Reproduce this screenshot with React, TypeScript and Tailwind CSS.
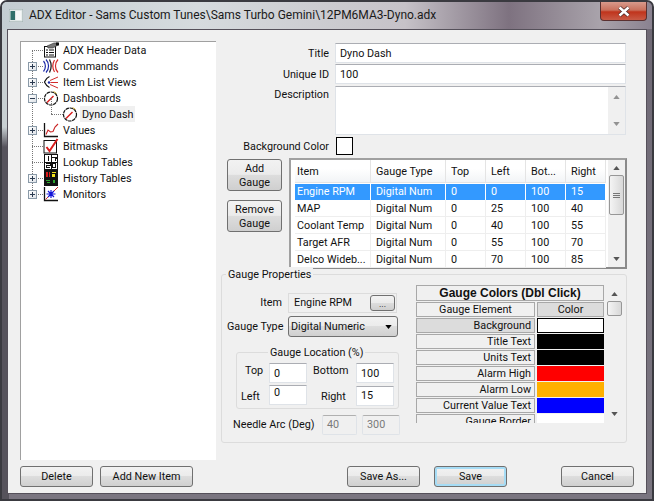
import type { ReactNode } from "react";

const font = "font-['Roboto',_'Noto_Sans',_sans-serif]";

type TreeItem = {
  label: string;
  icon: ReactNode;
  toggle?: "plus" | "minus";
  child?: boolean;
  selected?: boolean;
};

function Gauge() {
  return (
    <svg viewBox="0 0 16 16" className="h-4 w-4 shrink-0">
      <circle cx="8" cy="8.500" r="6.500" fill="#fff" stroke="#111" strokeWidth="1.200" strokeDasharray="3.500 .7" />
      <path d="M4 12.500 10.500 6" stroke="#d81c1c" strokeWidth="1.400" />
      <path d="M10.500 1.500 13.500 3.500" stroke="#c9a227" strokeWidth="1" />
    </svg>
  );
}

function HeaderIcon() {
  return (
    <svg viewBox="0 0 16 16" className="h-4 w-4 shrink-0">
      <rect x="1.500" y="4.500" width="11" height="10.500" fill="#fff" stroke="#111" />
      <path d="M3 8h2M6 8h5M3 10.500h2M6 10.500h5M3 13h2M6 13h5" stroke="#111" />
      <path d="M4 4 11 1l4 0v2l-5 3H5z" fill="#777" stroke="#333" strokeWidth=".6" />
      <rect x="13" y="0.500" width="3" height="3" fill="#111" />
    </svg>
  );
}

function CommandsIcon() {
  return (
    <svg viewBox="0 0 16 16" className="h-4 w-4 shrink-0" fill="none">
      <path d="M0.500 3c2.500 3 2.500 7.500 0 10.500M3 1.500c3.400 3.600 3.400 9.600 0 13" stroke="#1c2aa8" strokeWidth="1.200" />
      <path d="M6.500 1.500c2 3.800 2 9 0 13" stroke="#222" strokeWidth="1.300" />
      <path d="M11.500 2c-2 3.500-2 8.500 0 12M15 1.500c-3.400 3.600-3.400 9.600 0 13" stroke="#d42a2a" strokeWidth="1.200" />
    </svg>
  );
}

function ViewsIcon() {
  return (
    <svg viewBox="0 0 16 16" className="h-4 w-4 shrink-0" fill="none">
      <path d="M6.500 2.500C3 4 2.500 6 1.500 8c1 2 1.500 4 5 5.500" stroke="#111" strokeWidth="1.200" />
      <path d="M7 6.500 15 3M7.500 8.500H15M7 10.500l8 3.500" stroke="#d42a2a" />
      <circle cx="6" cy="8.500" r="1.200" fill="#1c2aa8" />
    </svg>
  );
}

function ValuesIcon() {
  return (
    <svg viewBox="0 0 16 16" className="h-4 w-4 shrink-0" fill="none">
      <path d="M1.500 1v13.500H15" stroke="#111" strokeWidth="1.300" />
      <path d="M3 12.500 5 8l2.500 2L10 9.500 12 5l3-3" stroke="#c92424" strokeWidth="1.100" />
    </svg>
  );
}

function BitmasksIcon() {
  return (
    <svg viewBox="0 0 16 16" className="h-4 w-4 shrink-0" fill="none">
      <rect x="1" y="2.500" width="12.500" height="12.500" fill="#fff" stroke="#111" />
      <path d="M3.500 9 6.500 13 14.500 1" stroke="#d81c1c" strokeWidth="2" />
    </svg>
  );
}

function DigitCells({ colors }: { colors: string[] }) {
  return (
    <svg viewBox="0 0 14 16" className="mx-[1px] h-4 w-[14px] shrink-0" shapeRendering="crispEdges" fill="none">
      <rect x="0.500" y="0.500" width="13" height="15" fill={colors[0] === "#fff" ? "#fff" : "#111"} stroke="#111" />
      <rect x="2" y="2" width="4" height="5" fill={colors[0]} />
      <rect x="8" y="2" width="4" height="5" fill={colors[1]} />
      <rect x="2" y="9" width="4" height="5" fill={colors[2]} />
      <rect x="8" y="9" width="4" height="5" fill={colors[3]} />
      <path d="M4 2v5M8 3h4v1h-1v3M2 9.500h4v2H2v2h4M8.500 9.500h3v4h-3z" stroke="#111" />
      <path d="M0 8h14M7 0v16" stroke="#111" />
    </svg>
  );
}

function MonitorsIcon() {
  return (
    <svg viewBox="0 0 16 16" className="h-4 w-4 shrink-0" fill="none">
      <path d="M1.500 1v13.500H15" stroke="#111" strokeWidth="1.300" />
      <path d="M2.500 13.500 15 1" stroke="#d42a2a" />
      <path d="M8 4v8M3.500 8h9M5 5l6 6M11 5l-6 6" stroke="#1414d8" strokeWidth="1.200" />
    </svg>
  );
}

const treeItems: TreeItem[] = [
  { label: "ADX Header Data", icon: <HeaderIcon /> },
  { label: "Commands", icon: <CommandsIcon />, toggle: "plus" },
  { label: "Item List Views", icon: <ViewsIcon />, toggle: "plus" },
  { label: "Dashboards", icon: <Gauge />, toggle: "minus" },
  { label: "Dyno Dash", icon: <Gauge />, child: true, selected: true },
  { label: "Values", icon: <ValuesIcon />, toggle: "plus" },
  { label: "Bitmasks", icon: <BitmasksIcon /> },
  { label: "Lookup Tables", icon: <DigitCells colors={["#fff", "#fff", "#fff", "#fff"]} /> },
  { label: "History Tables", icon: <DigitCells colors={["#d81c1c", "#f2e21b", "#2ea52e", "#2ea52e"]} />, toggle: "plus" },
  { label: "Monitors", icon: <MonitorsIcon />, toggle: "plus" },
];

const gaugeRows = [
  ["Engine RPM", "Digital Num", "0", "0", "100", "15"],
  ["MAP", "Digital Num", "0", "25", "100", "40"],
  ["Coolant Temp", "Digital Num", "0", "40", "100", "55"],
  ["Target AFR", "Digital Num", "0", "55", "100", "70"],
  ["Delco Wideb...", "Digital Num", "0", "70", "100", "85"],
];

const colWidths = ["w-[76px] pl-[2px]", "w-[75px] pl-[5px]", "w-[40px] pl-[5px]", "w-[40px] pl-[5px]", "w-[40px] pl-[5px]", "w-[40px] pl-[5px]"];

const colorRows = [
  { name: "Background", color: "bg-white", active: true },
  { name: "Title Text", color: "bg-black" },
  { name: "Units Text", color: "bg-black" },
  { name: "Alarm High", color: "bg-[#ff0000]" },
  { name: "Alarm Low", color: "bg-[#ffb000]" },
  { name: "Current Value Text", color: "bg-[#0000ff]" },
  { name: "Gauge Border", color: "bg-white" },
];

function Toggle({ kind }: { kind: "plus" | "minus" }) {
  return (
    <span className="relative z-10 ml-[7px] flex h-[9px] w-[9px] items-center justify-center border border-[#8a9aa8] bg-[linear-gradient(135deg,#fff,#dfe3e8)]">
      <span className="absolute h-px w-[5px] bg-[#2a3a50]" />
      {kind === "plus" && <span className="absolute h-[5px] w-px bg-[#2a3a50]" />}
    </span>
  );
}

function TreeRow({ item }: { item: TreeItem }) {
  return (
    <div className="relative flex h-4 items-center">
      {item.child ? (
        <>
          <span className="absolute left-[30px] top-[-8px] h-4 border-l border-dotted border-[#777]" />
          <span className="absolute left-[30px] top-2 w-[12px] border-t border-dotted border-[#777]" />
          <span className="ml-[41px]">{item.icon}</span>
          <span className="ml-[2px] h-4 bg-[#f0f0f0] px-[2px] pt-[1px] leading-4">{item.label}</span>
        </>
      ) : (
        <>
          <span className="absolute left-[11px] top-2 w-[11px] border-t border-dotted border-[#777]" />
          <span className="w-[22px] shrink-0">{item.toggle && <Toggle kind={item.toggle} />}</span>
          <span className="relative">{item.icon}</span>
          <span className="ml-[4px] h-4 pt-[1px] leading-4">{item.label}</span>
        </>
      )}
    </div>
  );
}

function Btn({ children, className = "" }: { children: ReactNode; className?: string }) {
  return (
    <button className={`rounded-[3px] border border-[#707070] bg-[linear-gradient(#f2f2f2,#ebebeb_48%,#dddddd_50%,#cfcfcf)] pt-[1px] leading-[14px] text-[#111] ${className}`}>
      {children}
    </button>
  );
}

function TextInput({ value, className = "", disabled }: { value: string; className?: string; disabled?: boolean }) {
  return (
    <div className={`flex items-center border border-[#dfe3e8] border-t-[#abadb3] px-[4px] pt-[2px] ${disabled ? "border-[#b0b0b0] border-t-[#b0b0b0] bg-[#f0f0f0] text-[#7a7a7a]" : "bg-white"} ${className}`}>
      {value}
    </div>
  );
}

function Arrow({ dir, className = "" }: { dir: "up" | "down"; className?: string }) {
  return (
    <svg viewBox="0 0 8 5" className={`h-[4px] w-[7px] ${className}`}>
      <path d={dir === "up" ? "M0 5 4 0l4 5z" : "M0 0h8L4 5z"} fill="#555" />
    </svg>
  );
}

export default function App() {
  return (
    <div className={`${font} h-[501px] w-[654px] overflow-hidden rounded-t-[7px] border-2 border-[#3a3a40] [background:linear-gradient(#c8cfd2,#c8cfd2_125px,#56535c_145px)_left_top/7px_100%_no-repeat,linear-gradient(#6f6975,#7a7580)] text-[10.8px] text-[#111]`}>
      {/* title bar */}
      <div className="flex h-[27px] items-start bg-[linear-gradient(90deg,#c4cdd2_0%,#d6dbde_30%,#c6c2c8_62%,#7e7280_78%,#a9a3ab_92%,#8a8290_100%)]">
        <svg viewBox="0 0 14 13" className="ml-[7px] mt-[7px] h-[13px] w-[14px] shrink-0">
          <rect width="14" height="13" fill="#dfe6e6" stroke="#9aa" />
          <rect x="1.500" y="2" width="4.500" height="9" fill="#2f6f6a" />
          <rect x="7" y="2" width="5.500" height="9" fill="#f5f7f7" />
        </svg>
        <div className="ml-[6px] mt-[5px] whitespace-nowrap text-[12px] leading-[17px] text-[#1a1a1a]">
          ADX Editor - Sams Custom Tunes\Sams Turbo Gemini\12PM6MA3-Dyno.adx
        </div>
        <div className="ml-auto mr-[5px] flex h-[19px] w-[47px] shrink-0 items-center justify-center rounded-b-[4px] border border-t-0 border-[#5a3030] bg-[linear-gradient(#d89a8c,#c9705c_45%,#c0341c_55%,#c85a45)]">
          <svg viewBox="0 0 14 11" className="h-[11px] w-[14px]">
            <path d="M2.500 1.500 11.500 9.500M11.500 1.500 2.500 9.500" stroke="#4a2a2a" strokeWidth="4" />
            <path d="M2.500 1.500 11.500 9.500M11.500 1.500 2.500 9.500" stroke="#fff" strokeWidth="2.500" />
          </svg>
        </div>
      </div>

      {/* client area */}
      <div className="ml-[5px] flex h-[465px] w-[640px] flex-col border border-[#55505a] bg-[#f0f0f0] pl-[12px] pt-[11px]">
        <div className="flex h-[419px]">
          {/* tree */}
          <div className="relative h-[419px] w-[196px] shrink-0 border-l border-t border-[#a0a0a0] bg-white">
            <span className="absolute left-[11px] top-2 h-[144px] border-l border-dotted border-[#777]" />
            {treeItems.map((item) => (
              <TreeRow key={item.label} item={item} />
            ))}
          </div>

          {/* right side */}
          <div className="ml-[5px] w-[407px] shrink-0">
            <div className="ml-[8px] w-[398px]">
              <div className="mt-[2px] flex items-center">
                <span className="w-[101px] pr-[1px] pt-[2px] text-right">Title</span>
                <TextInput value="Dyno Dash" className="ml-[5px] h-[20px] w-[291px]" />
              </div>
              <div className="mt-[1px] flex items-center">
                <span className="w-[101px] pr-[1px] pt-[2px] text-right">Unique ID</span>
                <TextInput value="100" className="ml-[5px] h-[20px] w-[291px]" />
              </div>
              <div className="mt-[2px] flex items-start">
                <span className="w-[101px] pr-[1px] pt-[1px] text-right leading-4">Description</span>
                <div className="ml-[5px] flex h-[49px] w-[291px] justify-end border border-[#dfe3e8] border-t-[#abadb3] bg-white">
                  <div className="flex w-[17px] flex-col items-center justify-between bg-[#f0f0f0] py-[8px]">
                    <Arrow dir="up" className="opacity-60" />
                    <Arrow dir="down" className="opacity-60" />
                  </div>
                </div>
              </div>
              <div className="mt-[2px] flex items-center">
                <span className="w-[101px] pr-[1px] pt-[2px] text-right">Background Color</span>
                <div className="ml-[6px] h-[18px] w-[17px] border border-black bg-white" />
              </div>

              {/* gauge list */}
              <div className="-ml-[2px] mt-[3px] flex">
                <div className="flex w-[55px] shrink-0 flex-col gap-[9px] pt-[1px]">
                  <Btn className="h-[32px] w-[55px]">
                    Add
                    <br />
                    Gauge
                  </Btn>
                  <Btn className="h-[32px] w-[55px]">
                    Remove
                    <br />
                    Gauge
                  </Btn>
                </div>
                <div className="ml-[7px] flex h-[111px] w-[338px] border-2 border-[#a0a0a0] border-b-[#8a8a8a] border-r-[#8a8a8a] bg-white">
                  <div className="ml-[4px] w-[311px]">
                    <div className="flex h-[23px] items-center border-b border-[#e4e4e4] bg-[linear-gradient(#fff_40%,#f2f4f6)]">
                      {["Item", "Gauge Type", "Top", "Left", "Bot...", "Right"].map((h, i) => (
                        <div key={h} className={`${colWidths[i]} flex h-full items-center border-r border-[#e4e4e4] pt-[2px]`}>
                          {h}
                        </div>
                      ))}
                    </div>
                    {gaugeRows.map((row, r) => (
                      <div key={row[0]} className={`mt-px flex h-[16px] items-center border-b ${r === 0 ? "border-transparent bg-[#3399ff] text-white" : "border-[#eeeeee]"}`}>
                        {row.map((cell, i) => (
                          <div key={i} className={`${colWidths[i]} flex h-[17px] items-center whitespace-nowrap border-r pt-[1px] ${r === 0 ? "border-white" : "border-[#eeeeee]"}`}>
                            {cell}
                          </div>
                        ))}
                      </div>
                    ))}
                  </div>
                  <div className="ml-auto flex w-[17px] flex-col items-center bg-[#f0f0f0]">
                    <Arrow dir="up" className="mt-[6px]" />
                    <div className="mt-[5px] flex h-[40px] w-[15px] flex-col items-center justify-center gap-px rounded-[2px] border border-[#979797] bg-[linear-gradient(90deg,#f4f4f4,#d8d8d8)]">
                      <span className="h-px w-[7px] bg-[#777]" />
                      <span className="h-px w-[7px] bg-[#777]" />
                      <span className="h-px w-[7px] bg-[#777]" />
                    </div>
                    <Arrow dir="down" className="mb-[6px] mt-auto" />
                  </div>
                </div>
              </div>
            </div>

            {/* gauge properties */}
            <div className="relative mt-[5px] flex h-[169px] w-[406px] rounded-[3px] border border-[#dcdcdc]">
              <span className="absolute left-[4px] top-[-8px] bg-[#f0f0f0] px-[2px] leading-[15px]">Gauge Properties</span>
              <div className="w-[194px] shrink-0">
                <div className="mt-[18px] flex items-center">
                  <span className="w-[60px] text-right">Item</span>
                  <div className="ml-[6px] flex h-[20px] w-[109px] items-center justify-between border border-[#dcdcdc] pl-[5px] pr-px">
                    Engine RPM
                    <Btn className="h-[16px] w-[25px] text-[9px]">...</Btn>
                  </div>
                </div>
                <div className="mt-[3px] flex items-center">
                  <span className="ml-[5px] w-[58px] whitespace-nowrap">Gauge Type</span>
                  <div className="ml-[3px] flex h-[21px] w-[110px] items-center justify-between rounded-[3px] border border-[#707070] bg-[linear-gradient(#f2f2f2,#ebebeb_48%,#dddddd_50%,#cfcfcf)] pl-[2px] pr-[5px]">
                    Digital Numeric
                    <Arrow dir="down" className="[&_path]:fill-black" />
                  </div>
                </div>
                <div className="relative ml-[14px] mt-[15px] h-[57px] w-[163px] rounded-[3px] border border-[#dcdcdc]">
                  <span className="absolute left-[31px] top-[-8px] bg-[#f0f0f0] px-[2px] leading-[15px]">Gauge Location (%)</span>
                  <div className="mt-[10px] flex items-center">
                    <span className="ml-[8px] w-[24px] -translate-y-[2px]">Top</span>
                    <TextInput value="0" className="h-[20px] w-[38px]" />
                    <span className="ml-[6px] w-[43px] -translate-y-[2px]">Bottom</span>
                    <TextInput value="100" className="h-[20px] w-[38px]" />
                  </div>
                  <div className="flex items-center">
                    <span className="ml-[4px] mt-[5px] w-[28px]">Left</span>
                    <TextInput value="0" className="h-[20px] w-[38px] !pt-0 pb-[4px]" />
                    <span className="ml-[14px] mt-[5px] w-[35px]">Right</span>
                    <TextInput value="15" className="mt-[3px] h-[20px] w-[38px] !pt-0" />
                  </div>
                </div>
                <div className="mt-[6px] flex items-center">
                  <span className="ml-[11px] w-[89px] whitespace-nowrap">Needle Arc (Deg)</span>
                  <TextInput value="40" disabled className="h-[20px] w-[35px] rounded-[2px] !pt-0" />
                  <TextInput value="300" disabled className="ml-[5px] h-[20px] w-[38px] rounded-[2px] !pt-0" />
                </div>
              </div>

              {/* gauge colors */}
              <div className="mt-[10px] flex h-[138px] w-[206px] overflow-hidden">
                <div className="w-[188px] shrink-0">
                  <div className="flex h-[16px] items-center justify-center border border-[#a8a8a8] bg-[#f0f0f0] font-['Liberation_Sans',_sans-serif] text-[12px] font-bold">
                    Gauge Colors (Dbl Click)
                  </div>
                  <div className="mt-px flex h-[15px] gap-[2px]">
                    <div className="flex w-[119px] items-center justify-center border border-[#a8a8a8] pt-[1px]">Gauge Element</div>
                    <div className="flex w-[67px] items-center justify-center border border-[#a8a8a8] bg-[#dcdcdc] pt-[1px]">Color</div>
                  </div>
                  {colorRows.map((row) => (
                    <div key={row.name} className="mt-px flex h-[15px] gap-[2px]">
                      <div className={`flex w-[119px] items-center justify-end whitespace-nowrap border border-[#a8a8a8] pr-[3px] pt-[1px] ${row.active ? "bg-[#dcdcdc]" : ""}`}>
                        {row.name}
                      </div>
                      <div className={`w-[67px] ${row.color} ${row.active ? "border border-black" : ""}`} />
                    </div>
                  ))}
                </div>
                <div className="ml-[2px] flex w-[16px] flex-col items-center">
                  <Arrow dir="up" className="mt-[7px]" />
                  <div className="mt-[5px] h-[15px] w-[15px] rounded-[2px] border border-[#979797] bg-[linear-gradient(90deg,#f4f4f4,#d8d8d8)]" />
                  <Arrow dir="down" className="mb-[7px] mt-auto" />
                </div>
              </div>
            </div>
          </div>
        </div>

        {/* bottom buttons */}
        <div className="mt-[6px] flex">
          <Btn className="h-[21px] w-[73px]">Delete</Btn>
          <Btn className="ml-[7px] h-[21px] w-[93px]">Add New Item</Btn>
          <Btn className="ml-[154px] h-[21px] w-[73px]">Save As...</Btn>
          <Btn className="ml-[14px] h-[21px] w-[73px] border-[#3c7fb1] shadow-[inset_0_0_0_2px_#a6dcf5]">Save</Btn>
          <Btn className="ml-[54px] h-[21px] w-[73px]">Cancel</Btn>
        </div>
      </div>
    </div>
  );
}
